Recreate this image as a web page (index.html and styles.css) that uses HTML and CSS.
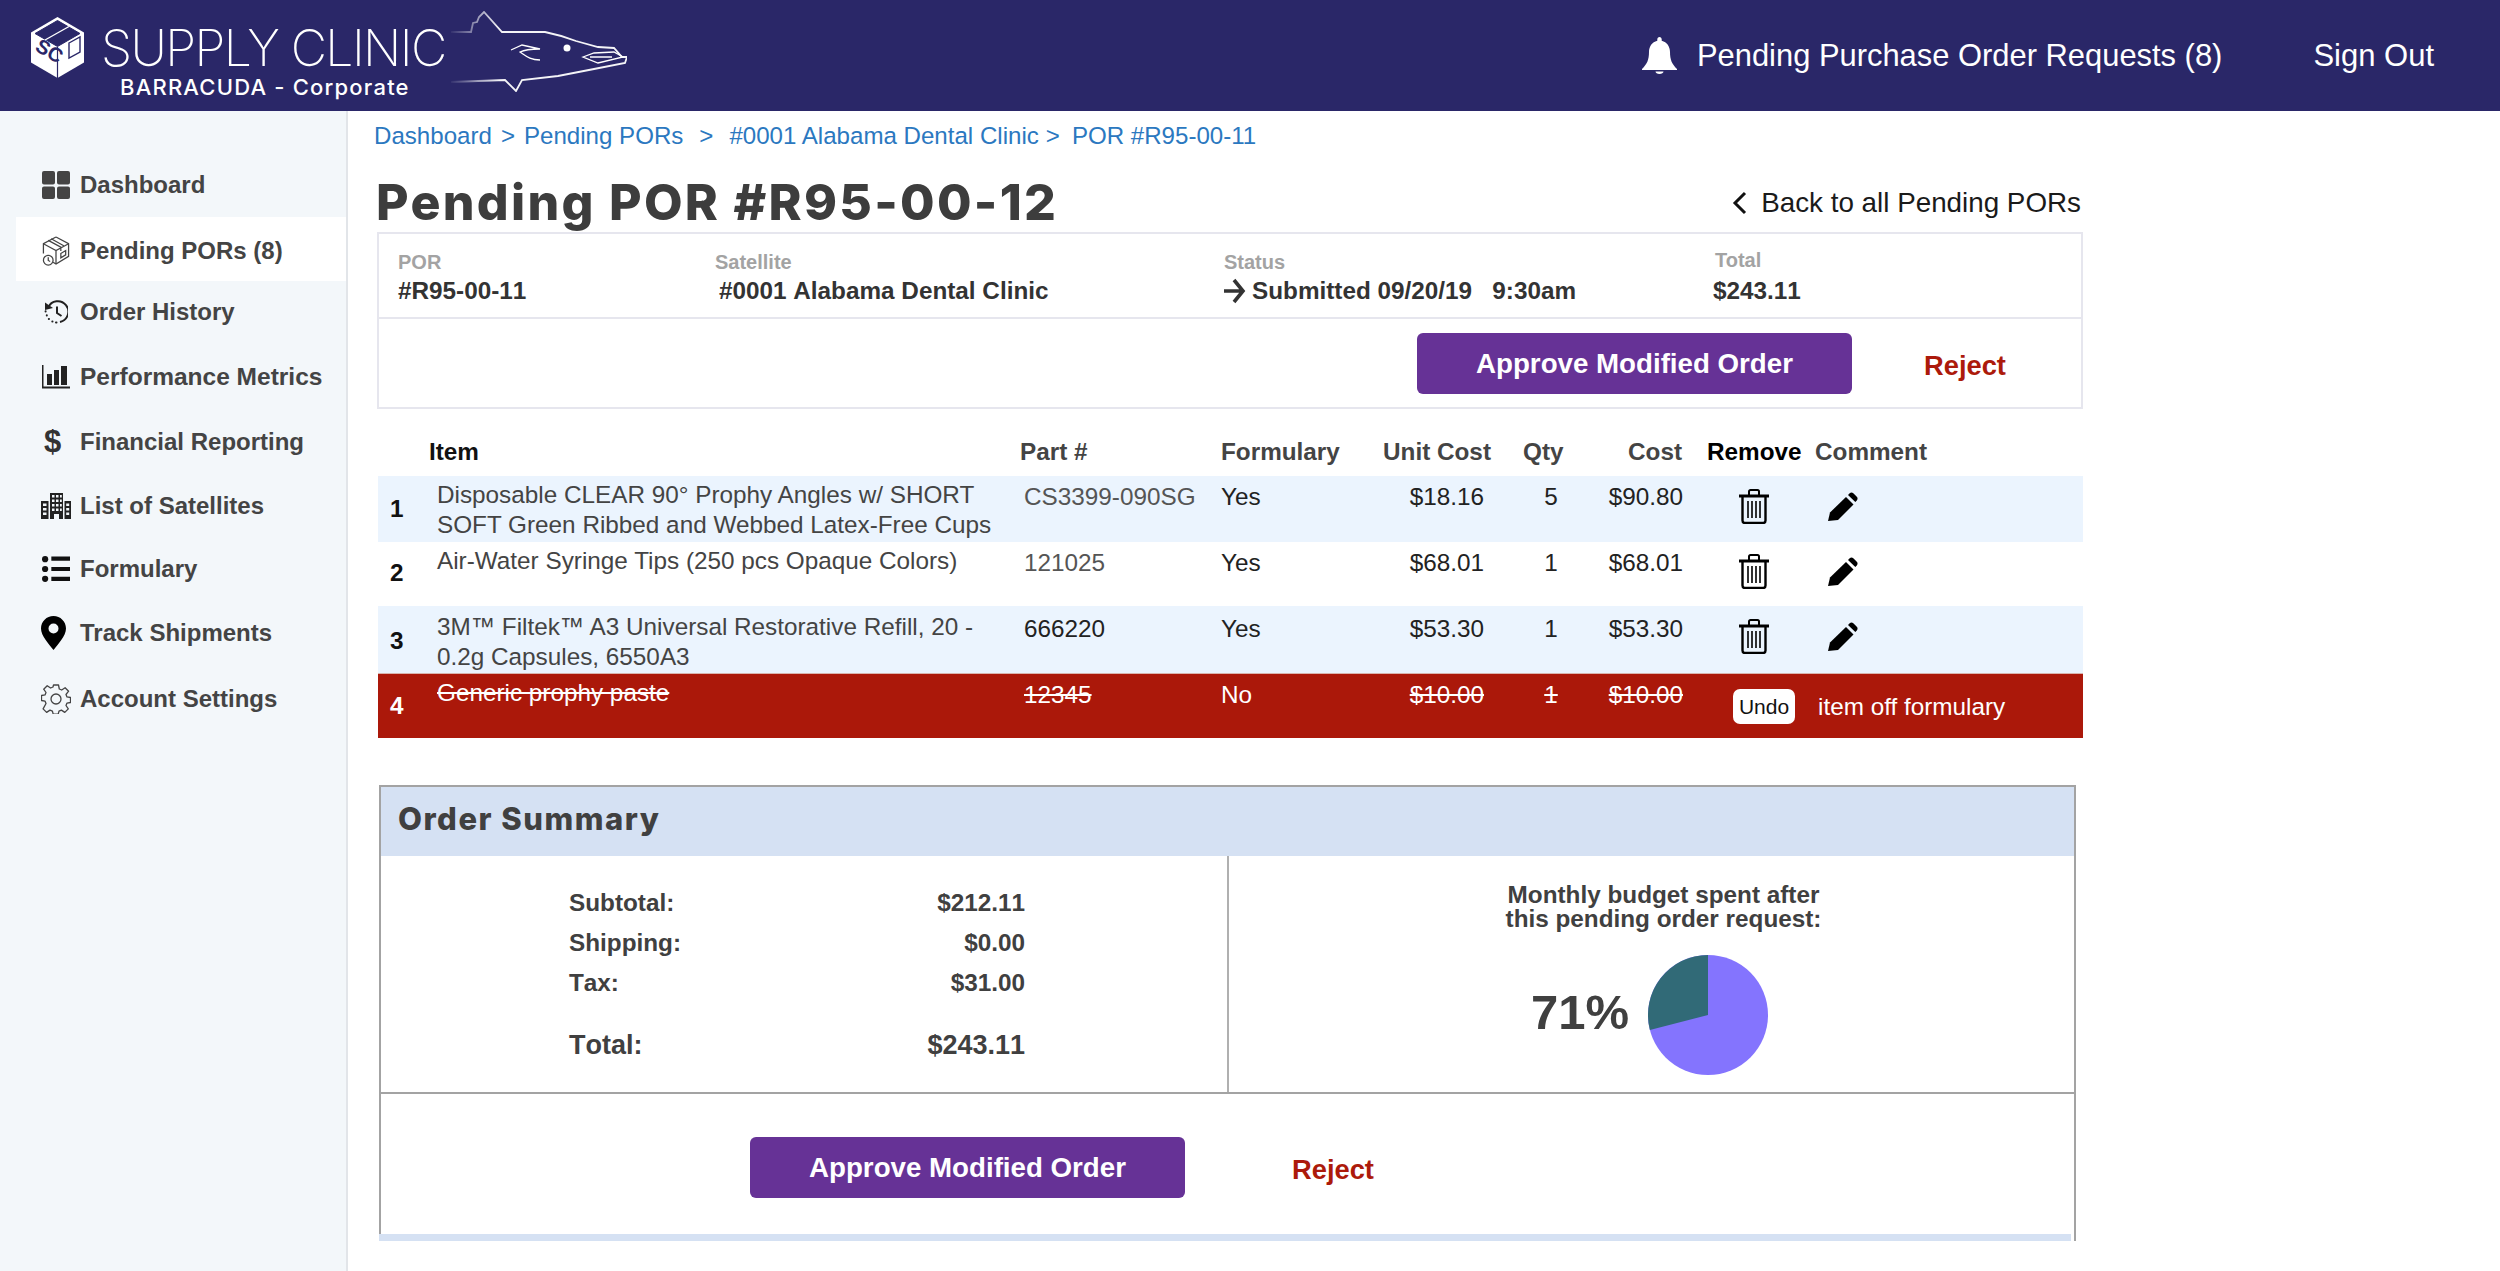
FILE: index.html
```html
<!DOCTYPE html>
<html lang="en">
<head>
<meta charset="utf-8">
<title>Pending POR #R95-00-12</title>
<link rel="stylesheet" href="styles.css">
</head>
<body>
<svg class="defs" width="0" height="0">
  <symbol id="trash" viewBox="0 0 30 35">
    <path d="M10 6V2.500C10 1.600 10.600 1 11.500 1h7c.9 0 1.500.6 1.500 1.500V6" fill="none" stroke="#000" stroke-width="2"/>
    <path d="M0 5.500h30v3H0z" fill="#000"/>
    <path d="M3.500 8v23.500c0 1.400 1 2.500 2.500 2.500h18c1.500 0 2.500-1.100 2.500-2.500V8" fill="none" stroke="#000" stroke-width="2.400"/>
    <path d="M9 12v17M13 12v17M17 12v17M21 12v17" stroke="#000" stroke-width="1.600"/>
  </symbol>
  <symbol id="pencil" viewBox="0 0 30 29">
    <path d="M0 29l2-8.500L18 5l7.500 7.500L10 28z" fill="#000"/>
    <path d="M20 3l1.700-1.700c1-1 2.600-1 3.600 0l3.500 3.500c1 1 1 2.600 0 3.600L27.300 10z" fill="#000"/>
  </symbol>
</svg>

<header class="topbar">
  <div class="brand">
    <svg class="brand-box" viewBox="0 0 55 63" aria-hidden="true">
      <path d="M27.500 1L54 16.500v30L27.500 62 1 46.500v-30z" fill="#fff"/>
      <path d="M27.500 4.500L50 17.500 27.500 30.500 5 17.500z" fill="#2a2768" stroke="#2a2768"/>
      <path d="M15 24L39 10.500" stroke="#fff" stroke-width="1.400"/>
      <path d="M27.500 31v31" stroke="#2a2768" stroke-width="1.200"/>
      <path d="M39 27l11-6v15l-11 6z" fill="none" stroke="#2a2768" stroke-width="1.400"/>
      <text class="brand-box-text" transform="translate(4 34) rotate(30)">SC</text>
    </svg>
    <div class="brand-text">
      <div class="brand-name">SUPPLY CLINIC</div>
      <div class="brand-sub">BARRACUDA - Corporate</div>
    </div>
    <svg class="brand-fish" viewBox="451 11 176 81" aria-hidden="true">
      <defs>
        <linearGradient id="fade" gradientUnits="userSpaceOnUse" x1="451" y1="0" x2="500" y2="0">
          <stop offset="0" stop-color="#fff" stop-opacity="0.05"/>
          <stop offset="1" stop-color="#fff" stop-opacity="0.95"/>
        </linearGradient>
      </defs>
      <path d="M451 32H471L473 23L477 22L479 17L484 12L502 32L545 32Q560 35 576 41L598 47L614 48L622 57L627 57L625 63L594 69L558 76L522 80L516 91L505 80L451 82" fill="none" stroke="url(#fade)" stroke-width="1.800"/>
      <path d="M511 50L522 45L540 49C532 49 526 49 520 52C526 56 530 60 540 60M583 57L594 53L614 52L623 57L598 63zM590 57H612" fill="none" stroke="#fff" stroke-width="1.300"/>
      <circle cx="567" cy="48" r="3.500" fill="#fff"/>
    </svg>
  </div>
  <nav class="top-actions">
    <svg class="bell" viewBox="0 0 35 37" aria-hidden="true">
      <path d="M17.500 0c1.300 0 2.200 1 2.200 2.300v1.400C25 5 28 9.500 28 15c0 8 2 12 7 17v1H0v-1c5-5 7-9 7-17 0-5.500 3-10 8.300-11.300V2.300C15.300 1 16.200 0 17.500 0zM13.500 34.500h8c0 1.500-1.800 2.500-4 2.500s-4-1-4-2.500z" fill="#fff"/>
    </svg>
    <span class="top-link">Pending Purchase Order Requests (8)</span>
    <span class="top-link sign-out">Sign Out</span>
  </nav>
</header>

<div class="shell">
  <aside class="sidebar">
    <a class="nav-item"><span class="nav-icon"><svg class="i28" viewBox="0 0 28 28"><path d="M2 0h9a2 2 0 0 1 2 2v9.500a2 2 0 0 1-2 2H2a2 2 0 0 1-2-2V2a2 2 0 0 1 2-2zM17 0h9a2 2 0 0 1 2 2v9.500a2 2 0 0 1-2 2h-9a2 2 0 0 1-2-2V2a2 2 0 0 1 2-2zM2 15.500h9a2 2 0 0 1 2 2V26a2 2 0 0 1-2 2H2a2 2 0 0 1-2-2v-8.500a2 2 0 0 1 2-2zM17 15.500h9a2 2 0 0 1 2 2V26a2 2 0 0 1-2 2h-9a2 2 0 0 1-2-2v-8.500a2 2 0 0 1 2-2z" fill="#444"/></svg></span>Dashboard</a>
    <a class="nav-item active"><span class="nav-icon"><svg class="i30" viewBox="0 0 28 31"><g fill="none" stroke="#444" stroke-width="1.300"><path d="M14 1L27 8v13l-13 8-3-1.800M1 18V8l13-7"/><path d="M1 8l13 7 13-7M14 15v14M6 4.500l13 7v4M9 2.800l13 7.200"/><path d="M19 18l5-3v4.500l-5 3z"/><circle cx="6" cy="25" r="5"/><path d="M6 22v3.300l2 1"/></g></svg></span>Pending PORs (8)</a>
    <a class="nav-item"><span class="nav-icon"><svg class="i24" viewBox="0 0 24 24"><g fill="none" stroke="#222" stroke-width="2"><path d="M4.200 7.500A10.500 10.500 0 1 1 16 22"/><path d="M13 6.500v6.500l4.500 3"/><path d="M12.500 22.500h-.5M8.500 21.500h-.2M5 19h-.2M2.800 15.500v-.2M1.600 11.500v-.2" stroke-linecap="round"/></g><path d="M1 2.500l8 5.500-8 2z" fill="#222"/></svg></span>Order History</a>
    <a class="nav-item metrics"><span class="nav-icon"><svg class="i28" viewBox="0 0 28 24"><path d="M0 0h1.500v21.500H28V23.500H0z" fill="#222"/><path d="M5 9h5v11H5zM12 5h5v15h-5zM19 1h6v19h-6z" fill="#222"/></svg></span>Performance Metrics</a>
    <a class="nav-item"><span class="nav-icon dollar">$</span>Financial Reporting</a>
    <a class="nav-item"><span class="nav-icon"><svg class="i30" viewBox="0 0 30 26"><path fill-rule="evenodd" fill="#222" d="M9 0h13v26h-4v-5h-5v5H9zM11 2v2.500h2.500V2zM15 2v2.500h2.500V2zM19 2v2.500h1.800V2zM11 6.500V9h2.500V6.500zM15 6.500V9h2.500V6.500zM19 6.500V9h1.800V6.500zM11 11v2.500h2.500V11zM15 11v2.500h2.500V11zM19 11v2.500h1.800V11zM11 15.500V18h2.500v-2.500zM15 15.500V18h2.500v-2.500zM19 15.500V18h1.800v-2.500zM0 8h7.500v18H0zM2 10.500v2.500h3.500v-2.500zM2 15v2.500h3.500V15zM2 19.500V22h3.500v-2.500zM23.500 8H30v18h-6.500zM25.200 10.500v2.500h3v-2.500zM25.200 15v2.500h3V15zM25.200 19.500V22h3v-2.500z"/></svg></span>List of Satellites</a>
    <a class="nav-item"><span class="nav-icon"><svg class="i28" viewBox="0 0 27 25"><g fill="#111"><circle cx="3" cy="3" r="3"/><circle cx="3" cy="12.500" r="3"/><circle cx="3" cy="22" r="3"/><path d="M9 .500h18v4H9zM9 10.500h18v4H9zM9 20h18v4H9z"/></g></svg></span>Formulary</a>
    <a class="nav-item"><span class="nav-icon"><svg class="pin" viewBox="0 0 25 34"><path fill-rule="evenodd" fill="#000" d="M12.500 0C19.400 0 25 5.500 25 12.500 25 20 17 28 12.500 34 8 28 0 20 0 12.500 0 5.500 5.600 0 12.500 0zM12.500 7.500a5 5 0 1 0 0 10 5 5 0 0 0 0-10z"/></svg></span>Track Shipments</a>
    <a class="nav-item"><span class="nav-icon"><svg class="i30" viewBox="0 0 30 30"><g fill="none" stroke="#444" stroke-width="1.300" stroke-linejoin="round"><path d="M12.500 1h5l.8 4 2.400 1 3.400-2.300 3.500 3.500L25 10.500l1 2.400 3.500.6v5l-3.500.6-1 2.400 2.300 3.400-3.500 3.500-3.400-2.300-2.400 1-.8 3h-5l-.8-3-2.400-1-3.400 2.300-3.500-3.500L5 19.500l-1-2.400-3.500-.6v-5l3.500-.6 1-2.400-2.300-3.300 3.500-3.500 3.400 2.300 2.400-1z"/><circle cx="15" cy="15" r="5"/></g></svg></span>Account Settings</a>
  </aside>

  <main class="main">
    <div class="crumbs">
      <a>Dashboard</a><span class="sep">&gt;</span><a>Pending PORs</a><span class="sep sep-wide">&gt;</span><a>#0001 Alabama Dental Clinic</a><span class="sep sep-tight">&gt;</span><a>POR #R95-00-11</a>
    </div>

    <div class="title-row">
      <h1 class="title">Pending POR #R95-00-12</h1>
      <a class="back"><svg class="chevron" viewBox="0 0 15 24"><path d="M13 2L3 12l10 10" fill="none" stroke="#111" stroke-width="3"/></svg>Back to all Pending PORs</a>
    </div>

    <section class="info">
      <div class="info-grid">
        <div><div class="label">POR</div><div class="value">#R95-00-11</div></div>
        <div><div class="label">Satellite</div><div class="value nudge">#0001 Alabama Dental Clinic</div></div>
        <div><div class="label">Status</div><div class="value status"><svg class="arrow" viewBox="0 0 22 26"><path d="M0 13h19M10 2l9 11-9 11" fill="none" stroke="#333" stroke-width="3.600"/></svg>Submitted 09/20/19&nbsp;&nbsp; 9:30am</div></div>
        <div><div class="label label-up">Total</div><div class="value total-value">$243.11</div></div>
      </div>
      <div class="actions actions-top">
        <button class="approve">Approve Modified Order</button>
        <a class="reject">Reject</a>
      </div>
    </section>

    <section class="items">
      <div class="thead">
        <div class="strong">Item</div><div>Part #</div><div>Formulary</div><div>Unit Cost</div><div>Qty</div><div class="right">Cost</div><div class="strong remove-head">Remove</div><div>Comment</div>
      </div>
      <div class="row blue h66">
        <div class="num">1</div><div class="name">Disposable CLEAR 90° Prophy Angles w/ SHORT<br>SOFT Green Ribbed and Webbed Latex-Free Cups</div><div class="cell part">CS3399-090SG</div><div class="cell">Yes</div><div class="cell unit">$18.16</div><div class="cell center">5</div><div class="cell right">$90.80</div>
        <div class="ico"><svg class="trash"><use href="#trash"/></svg></div><div class="ico"><svg class="pencil"><use href="#pencil"/></svg></div>
      </div>
      <div class="row h64">
        <div class="num">2</div><div class="name">Air-Water Syringe Tips (250 pcs Opaque Colors)</div><div class="cell part">121025</div><div class="cell">Yes</div><div class="cell unit">$68.01</div><div class="cell center">1</div><div class="cell right">$68.01</div>
        <div class="ico"><svg class="trash"><use href="#trash"/></svg></div><div class="ico"><svg class="pencil"><use href="#pencil"/></svg></div>
      </div>
      <div class="row blue h67">
        <div class="num">3</div><div class="name">3M™ Filtek™ A3 Universal Restorative Refill, 20 -<br>0.2g Capsules, 6550A3</div><div class="cell">666220</div><div class="cell">Yes</div><div class="cell unit">$53.30</div><div class="cell center">1</div><div class="cell right">$53.30</div>
        <div class="ico"><svg class="trash"><use href="#trash"/></svg></div><div class="ico"><svg class="pencil"><use href="#pencil"/></svg></div>
      </div>
      <div class="row off h65">
        <div class="num">4</div><div class="name strike">Generic prophy paste</div><div class="cell strike">12345</div><div class="cell">No</div><div class="cell unit strike">$10.00</div><div class="cell center strike">1</div><div class="cell right strike">$10.00</div>
        <div class="off-note"><button class="undo">Undo</button><span>item off formulary</span></div>
      </div>
    </section>

    <section class="summary">
      <h2 class="summary-head">Order Summary</h2>
      <div class="summary-body">
        <div class="totals">
          <div class="line"><span>Subtotal:</span><span>$212.11</span></div>
          <div class="line"><span>Shipping:</span><span>$0.00</span></div>
          <div class="line"><span>Tax:</span><span>$31.00</span></div>
          <div class="line grand"><span>Total:</span><span>$243.11</span></div>
        </div>
        <div class="budget">
          <p class="budget-text">Monthly budget spent after<br>this pending order request:</p>
          <div class="budget-chart">
            <span class="percent">71%</span>
            <svg class="pie" viewBox="-60 -60 120 120">
              <circle r="60" fill="#8474fe"/>
              <path d="M0 0L-58.130 14.900A60 60 0 0 1 0 -60z" fill="#316a77"/>
            </svg>
          </div>
        </div>
      </div>
      <div class="actions actions-bottom">
        <button class="approve">Approve Modified Order</button>
        <a class="reject">Reject</a>
      </div>
      <div class="strip"></div>
    </section>
  </main>
</div>
</body>
</html>
```

FILE: styles.css
```css
* { box-sizing: border-box; }
html, body { margin: 0; height: 100%; }
body {
  font-family: "Liberation Sans", Arial, sans-serif;
  font-size: 24.3px;
  color: #222;
  background: #fff;
  overflow: hidden;
}
.defs { position: absolute; }

/* top bar */
.topbar {
  height: 111px;
  background: #2a2768;
  display: flex;
  align-items: center;
  color: #fff;
  padding: 0 66px 0 30px;
}
.brand { display: flex; align-items: flex-start; height: 111px; }
.brand-box { width: 55px; height: 63px; margin: 16px 16px 0 0; flex: none; }
.brand-box-text { font: 700 20px "Liberation Sans", sans-serif; fill: #2a2768; }
.brand-text { width: 344px; padding-top: 21px; }
.brand-name {
  font: 200 50px/54px Inter, sans-serif;
  letter-spacing: -1.6px;
  white-space: nowrap;
}
.brand-sub {
  font: 500 22px/24px Inter, sans-serif;
  letter-spacing: 1.2px;
  margin: 0 0 0 19px;
  white-space: nowrap;
}
.brand-fish { width: 176px; height: 81px; margin: 11px 0 0 6px; flex: none; }
.top-actions { margin-left: auto; display: flex; align-items: center; }
.bell { width: 35px; height: 37px; margin-right: 20px; }
.top-link { font-size: 30.9px; line-height: 40px; }
.sign-out { margin-left: 91px; font-size: 31px; }

/* shell */
.shell { display: grid; grid-template-columns: 348px 1fr; height: 1160px; }
.sidebar {
  background: #f3f7fa;
  border-right: 2px solid #e2e5e9;
  padding: 42px 0 0 16px;
}
.nav-item {
  display: flex;
  align-items: center;
  height: 64px;
  padding-left: 26px;
  font-size: 24px;
  font-weight: 700;
  color: #444;
  white-space: nowrap;
}
.nav-item:nth-child(2) { padding-top: 3px; }
.nav-item:nth-child(3) { padding-bottom: 3px; }
.nav-item:nth-child(5),
.nav-item:nth-child(6) { padding-top: 1px; }
.nav-item:nth-child(9) { padding-top: 3px; }
.nav-item.metrics { font-size: 24.5px; }
.nav-item.active { background: #fff; }
.nav-icon { width: 38px; flex: none; display: flex; align-items: center; }
.dollar { font-size: 31px; font-weight: 700; color: #333; padding-left: 2px; }
.i28 { width: 28px; height: 28px; }
.i30 { width: 30px; height: 30px; margin-left: -1px; }
.i24 { width: 24px; height: 24px; margin-left: 2px; }
.pin { width: 25px; height: 34px; margin-left: -1px; }

/* main */
.main { padding: 10px 0 0 29px; width: 1735px; }
.crumbs { margin-left: -3px; height: 30px; line-height: 30px; font-size: 24.1px; color: #2b78c0; white-space: nowrap; }
.sep { margin: 0 9px; }
.sep-wide { margin: 0 16px 0 16px; }
.sep-tight { margin: 0 12px 0 7px; }
.title-row {
  height: 81px;
  padding-top: 21px;
  display: flex;
  justify-content: space-between;
  align-items: center;
}
.title {
  margin: 0 0 0 -1px;
  font: 800 50px/60px Inter, sans-serif;
  letter-spacing: 2.3px;
  color: #3d3d3d;
  white-space: nowrap;
}
.back { display: flex; align-items: center; font-size: 27.800px; color: #1a1a1a; white-space: nowrap; margin-right: 2px; padding-top: 2px; }
.chevron { width: 15px; height: 24px; margin-right: 14px; }

.info { width: 1706px; border: 2px solid #e6e6ee; }
.info-grid {
  display: grid;
  grid-template-columns: 317px 509px 491px 1fr;
  height: 85px;
  padding: 16px 0 0 19px;
  border-bottom: 2px solid #e6e6ee;
}
.label { font-size: 20px; line-height: 24px; font-weight: 700; color: #a3a3a3; }
.label-up { margin-top: -2px; padding-bottom: 2px; }
.value { font-size: 24.3px; line-height: 30px; font-weight: 700; color: #333; margin-top: 2px; white-space: nowrap; font-kerning: none; }
.nudge { margin-left: 4px; }
.total-value { margin-left: -2px; }
.status { display: flex; align-items: center; }
.arrow { width: 22px; height: 26px; margin-right: 6px; }

.actions { display: flex; align-items: flex-start; }
.actions-top { height: 88px; padding: 14px 0 0 1038px; }
.actions-bottom { height: 140px; padding: 43px 0 0 369px; }
.approve {
  width: 435px;
  height: 61px;
  border: 0;
  border-radius: 6px;
  background: #663296;
  color: #fff;
  font: 700 27.700px "Liberation Sans", sans-serif;
  padding: 0;
}
.reject { color: #ac1a0b; font-size: 27.300px; font-weight: 700; line-height: 36px; margin-top: 15px; }
.actions-top .reject { margin-left: 72px; }
.actions-bottom .reject { margin-left: 107px; }

/* table */
.items { margin: 28px 0 0 1px; width: 1705px; }
.thead {
  display: grid;
  grid-template-columns: 51px 591px 201px 162px 140px 80px 79px 133px 1fr;
  height: 39px;
  font-weight: 700;
  line-height: 30px;
  color: #444;
  white-space: nowrap;
}
.thead > .strong:first-child { grid-column: 2; color: #111; }
.thead .strong { color: #000; }
.remove-head { padding-left: 25px; }
.row {
  display: grid;
  grid-template-columns: 59px 587px 197px 163px 134px 66px 99px 142px 36px 1fr;
  line-height: 30px;
  color: #222;
}
.h66 { height: 66px; }
.h64 { height: 64px; }
.h67 { height: 67px; }
.h65 { height: 65px; }
.blue { background: #ebf4fe; }
.off { background: #ab180a; color: #fff; border-top: 1px solid #d9b4ae; }
.num { font-weight: 700; color: #111; padding-left: 12px; align-self: center; }
.h64 .num { margin-top: -2px; }
.h67 .num { margin-top: 2px; }
.off .num { color: #fff; }
.name { color: #444; padding-top: 4px; white-space: nowrap; }
.h67 .name { padding-top: 6px; }
.off .name { color: #fff; padding-top: 4px; }
.cell { padding-top: 6px; white-space: nowrap; }
.h67 .cell { padding-top: 8px; }
.part { color: #555; }
.right { text-align: right; }
.unit { text-align: right; padding-right: 34px; }
.center { text-align: center; }
.strike { text-decoration: line-through; }
.ico { display: flex; align-items: center; justify-content: center; padding-bottom: 6px; }
.trash { width: 30px; height: 35px; }
.pencil { width: 30px; height: 29px; }
.off-note { grid-column: 8 / 11; display: flex; align-items: flex-start; padding: 15px 0 0 50px; }
.off-note span { margin-left: 23px; padding-top: 3px; white-space: nowrap; }
.undo {
  width: 62px;
  height: 35px;
  border: 0;
  border-radius: 7px;
  background: #fff;
  color: #111;
  font: 21px "Liberation Sans", sans-serif;
  padding: 0;
}

/* summary */
.summary { margin: 47px 0 0 2px; width: 1697px; border: 2px solid #a3a3a3; border-bottom: 0; }
.summary-head {
  margin: 0;
  height: 69px;
  background: #d5e1f3;
  padding-left: 17px;
  font: 800 31px/63px Inter, sans-serif;
  letter-spacing: 1.5px;
  color: #404040;
}
.summary-body {
  display: grid;
  grid-template-columns: 848px 1fr;
  height: 238px;
  border-bottom: 2px solid #a3a3a3;
}
.totals {
  border-right: 2px solid #b0b0b0;
  padding: 27px 202px 0 188px;
  font-weight: 700;
  color: #404040;
  font-kerning: none;
}
.line { display: flex; justify-content: space-between; line-height: 40px; }
.grand { font-size: 27px; margin-top: 22px; }
.budget { color: #404040; }
.budget-text { margin: 27px 0 0 24px; font-weight: 700; line-height: 24px; text-align: center; }
.budget-chart { display: flex; align-items: center; padding-left: 302px; margin-top: 24px; }
.percent { font-size: 49px; font-weight: 700; width: 117px; margin-top: -6px; }
.pie { width: 120px; height: 120px; }
.strip { height: 7px; margin: 0 3px 0 -2px; background: #d5e1f3; }
```
